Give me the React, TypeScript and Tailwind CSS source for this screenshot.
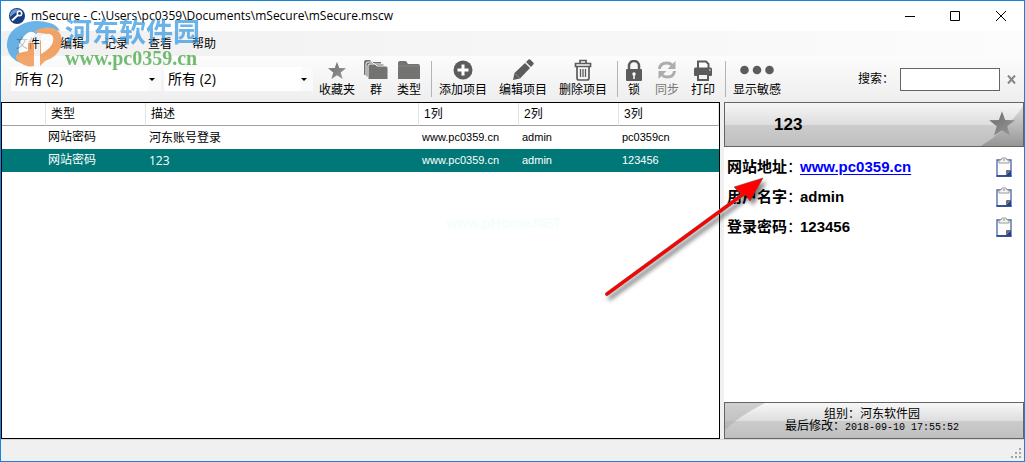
import type { ReactNode } from "react";
import clsx from "clsx";

const STAR = "M12 1l2.7 7.6 8.3.2-6.500 5 2.300 8L12 17.200 5.200 21.800l2.300-8L1 8.800l8.300-.2z";

const rows = [
  { type: "网站密码", desc: "河东账号登录", cols: ["www.pc0359.cn", "admin", "pc0359cn"] },
  { type: "网站密码", desc: "123", cols: ["www.pc0359.cn", "admin", "123456"] },
];

const menus = ["文件", "编辑", "记录", "查看", "帮助"];

function StarIcon({ className }: { className?: string }) {
  return (
    <svg viewBox="0 0 24 23" className={className}>
      <defs>
        <linearGradient id="star" x1="0" y1="0" x2="1" y2="1">
          <stop offset="0" stopColor="#6b6b6b" />
          <stop offset="1" stopColor="#999999" />
        </linearGradient>
      </defs>
      <path d={STAR} fill="url(#star)" />
    </svg>
  );
}

function FolderIcon() {
  return (
    <svg width="24" height="20" viewBox="0 0 24 20">
      <path d="M1 19V3q0-2 2-2h6l2 3h10q2 0 2 2v13z" fill="#737371" />
      <path d="M1 6h22" stroke="#858583" />
    </svg>
  );
}

function FoldersIcon() {
  return (
    <svg width="26" height="20" viewBox="0 0 26 20">
      <path d="M1 15V2q0-2 2-2h4l2 2h9v13z" fill="#737371" />
      <path d="M3 17V4q0-2 2-2h4l2 2h10v13z" fill="#737371" stroke="#f5f5f5" />
      <path d="M5 19.500V6q0-2 2-2h5l2 2h9q2 0 2 2v11.500z" fill="#737371" stroke="#f5f5f5" />
    </svg>
  );
}

function AddIcon() {
  return (
    <svg width="20" height="20" viewBox="0 0 20 20">
      <circle cx="10" cy="10" r="9.500" fill="#5c5c5c" />
      <path d="M10 4.500v11M4.500 10h11" stroke="#fff" strokeWidth="3" />
    </svg>
  );
}

function PencilIcon() {
  return (
    <svg width="22" height="22" viewBox="0 0 22 22">
      <path d="M1 21l1.500-7L13 4l5 5L8 19.500z" fill="#5c5c5c" />
      <path d="M14 3l2.500-2.500q1-.7 2 .2l2.700 2.800q1 1 .1 2L19 8z" fill="#5c5c5c" />
      <path d="M3 14.500l4.500 4.500" stroke="#a0a0a0" strokeWidth=".8" />
    </svg>
  );
}

function TrashIcon() {
  return (
    <svg width="18" height="22" viewBox="0 0 18 22" fill="none" stroke="#5c5c5c" strokeWidth="1.700">
      <path d="M6 4V1.500h6V4M1.500 7.500V4.500h15v3z" />
      <path d="M3 7.500V19q0 2 2 2h8q2 0 2-2V7.500" />
      <path d="M6.500 10v8M9 10v8M11.500 10v8" strokeWidth="1.300" />
    </svg>
  );
}

function LockIcon() {
  return (
    <svg width="18" height="21" viewBox="0 0 18 21">
      <path d="M4 10V6a5 5 0 0110 0v4" fill="none" stroke="#5c5c5c" strokeWidth="2.500" />
      <rect x="1" y="9" width="16" height="12" rx="1" fill="#5c5c5c" />
      <circle cx="9" cy="14" r="1.700" fill="#fff" />
      <path d="M9 14v5" stroke="#fff" strokeWidth="1.500" />
    </svg>
  );
}

function SyncIcon() {
  return (
    <svg width="20" height="20" viewBox="0 0 20 20">
      <path d="M2.500 9q.5-6 7.500-6 3 0 5 2" fill="none" stroke="#adadad" strokeWidth="3" />
      <path d="M18.500 1v8h-8z" fill="#adadad" />
      <path d="M17.500 11q-.5 6-7.500 6-3 0-5-2" fill="none" stroke="#adadad" strokeWidth="3" />
      <path d="M1.500 19v-8h8z" fill="#adadad" />
    </svg>
  );
}

function PrintIcon() {
  return (
    <svg width="20" height="21" viewBox="0 0 20 21">
      <path d="M5 8V1.500h8L15.500 4v4" fill="#fff" stroke="#5c5c5c" strokeWidth="2" />
      <path d="M1 15V9q0-1.500 1.500-1.500h15Q19 7.500 19 9v6q0 1-1 1H2q-1 0-1-1z" fill="#5c5c5c" />
      <path d="M5 14h10v6H5z" fill="#f5f5f5" stroke="#5c5c5c" strokeWidth="2" />
      <path d="M2 12.500h16" stroke="#5c5c5c" strokeWidth="2" />
      <path d="M16 10h1.500" stroke="#fff" />
    </svg>
  );
}

function DotsIcon() {
  return (
    <svg width="34" height="10" viewBox="0 0 34 10" fill="#5c5c5c">
      <circle cx="4.500" cy="5" r="4.300" />
      <circle cx="17" cy="5" r="4.300" />
      <circle cx="29.500" cy="5" r="4.300" />
    </svg>
  );
}

function ClipboardIcon() {
  return (
    <svg width="16" height="20" viewBox="0 0 16 20">
      <path d="M1 3h14v16H1z" fill="#fdfdfd" stroke="#4a64a3" strokeWidth="1.300" />
      <path d="M.5 19h15" stroke="#24428c" strokeWidth="1.500" />
      <path d="M9 19l6-6v6z" fill="#24428c" />
      <path d="M10 18v-4q0-1 1-1h4z" fill="#6e6e6e" />
      <path d="M3 6V4q0-1 1-1h1l1-2h4l1 2h1q1 0 1 1v2z" fill="#f4f4f4" stroke="#9a9a9a" />
      <path d="M7 3h2" stroke="#8c8c8c" />
    </svg>
  );
}

function ToolButton({ label, icon, className, dim }: { label: string; icon: ReactNode; className: string; dim?: boolean }) {
  return (
    <button className={clsx("flex shrink-0 flex-col items-center whitespace-nowrap pb-0.5", className, dim && "text-[#777]")}>
      <span className="flex h-6 items-center">{icon}</span>
      <span className="leading-4">{label}</span>
    </button>
  );
}

function Separator({ className }: { className: string }) {
  return <div className={clsx("h-9 w-px shrink-0 bg-[#b4b4b4]", className)} />;
}

function Combo({ label, className }: { label: string; className: string }) {
  return (
    <div className={clsx("relative h-6 shrink-0 bg-white", className)}>
      <select
        aria-label={label}
        className="h-full w-full appearance-none px-1 font-['Open_Sans','Noto_Sans_CJK_SC',sans-serif] text-[14px] leading-6"
      >
        <option>所有 (2)</option>
      </select>
      <span className="pointer-events-none absolute inset-y-0 right-0 flex w-3 items-center bg-[#fafafa]">
        <svg width="6" height="3" viewBox="0 0 6 3">
          <path d="M0 0h6L3 3z" />
        </svg>
      </span>
    </div>
  );
}

function TitleBar() {
  return (
    <header className="flex h-[30px] shrink-0 items-center bg-white pl-2 font-['Open_Sans',sans-serif]">
      <svg width="16" height="16" viewBox="0 0 16 16">
        <circle cx="8" cy="8" r="8" fill="#173d80" />
        <path d="M1 6q2-5 7-5 3 0 5 2Q7 3 1 9z" fill="#6d9ad4" />
        <path d="M3 12.500L9 7" stroke="#fff" strokeWidth="2" />
        <circle cx="10.500" cy="5.500" r="2.200" fill="none" stroke="#fff" strokeWidth="1.500" />
      </svg>
      <h1 className="ml-1.5 whitespace-nowrap text-[12px]">mSecure - C:\Users\pc0359\Documents\mSecure\mSecure.mscw</h1>
      <div className="ml-auto flex h-full">
        <button aria-label="最小化" className="flex w-[45px] items-center justify-center">
          <svg width="10" height="10" viewBox="0 0 10 10"><path d="M0 5.500h10" stroke="#000" /></svg>
        </button>
        <button aria-label="最大化" className="flex w-[46px] items-center justify-center">
          <svg width="10" height="10" viewBox="0 0 10 10"><path d="M.5.5h9v9h-9z" fill="none" stroke="#000" /></svg>
        </button>
        <button aria-label="关闭" className="flex w-[46px] items-center justify-center">
          <svg width="10" height="10" viewBox="0 0 10 10"><path d="M0 0l10 10M10 0L0 10" stroke="#000" /></svg>
        </button>
      </div>
    </header>
  );
}

function Toolbar() {
  return (
    <div className="flex h-[46px] shrink-0 items-center bg-linear-to-b from-[#fcfcfc] to-[#eeeeee] pl-2.5">
      <Combo label="类型" className="w-[150px]" />
      <Combo label="群" className="ml-[3px] w-[149px]" />
      <ToolButton label="收藏夹" className="ml-1.5 w-9" icon={<StarIcon className="h-[19px] w-5" />} />
      <ToolButton label="群" className="ml-2 w-[26px]" icon={<FoldersIcon />} />
      <ToolButton label="类型" className="ml-2 w-6" icon={<FolderIcon />} />
      <Separator className="ml-2.5" />
      <ToolButton label="添加项目" className="ml-[7px] w-12" icon={<AddIcon />} />
      <ToolButton label="编辑项目" className="ml-3 w-12" icon={<PencilIcon />} />
      <ToolButton label="删除项目" className="ml-3 w-12" icon={<TrashIcon />} />
      <Separator className="ml-2.5" />
      <ToolButton label="锁" className="ml-[7px] w-[18px]" icon={<LockIcon />} />
      <ToolButton label="同步" className="ml-3 w-6" icon={<SyncIcon />} dim />
      <ToolButton label="打印" className="ml-3 w-6" icon={<PrintIcon />} />
      <Separator className="ml-2.5" />
      <ToolButton label="显示敏感" className="ml-[7px] w-12" icon={<DotsIcon />} />
      <label htmlFor="search" className="ml-auto whitespace-nowrap">搜索：</label>
      <input id="search" className="ml-1.5 h-[23px] w-[100px] border border-[#646464] bg-white px-1" />
      <button aria-label="清除" className="ml-[7px] mr-2">
        <svg width="9" height="9" viewBox="0 0 9 9">
          <path d="M1 .5l7 8M8 .5l-7 8" stroke="#858585" strokeWidth="2" />
        </svg>
      </button>
    </div>
  );
}

function RecordList() {
  return (
    <section className="min-w-0 flex-1 border border-black bg-white">
      <table className="w-full table-fixed border-separate border-spacing-0 text-left">
        <colgroup>
          <col className="w-11" />
          <col className="w-[100px]" />
          <col />
          <col className="w-[100px]" />
          <col className="w-[100px]" />
          <col className="w-[100px]" />
        </colgroup>
        <thead>
          <tr>
            {["", "类型", "描述", "1列", "2列", "3列"].map((name, i) => (
              <th key={i} className="h-[23px] border-b border-r border-b-[#a0a0a0] border-r-[#e3e3e3] px-[5px] py-0 font-normal leading-[22px]">
                {name}
              </th>
            ))}
          </tr>
        </thead>
        <tbody>
          {rows.map((row, i) => (
            <tr key={i} className={clsx("h-[23px]", i === 1 && "bg-[#007878] text-white")}>
              <td className="p-0" />
              <td className="px-0.5 py-0 leading-[23px]">{row.type}</td>
              <td className="px-[3px] py-0 font-['Open_Sans','Noto_Sans_CJK_SC',sans-serif] leading-[23px]">{row.desc}</td>
              {row.cols.map((value, j) => (
                <td key={j} className="px-[3px] py-0 text-[11px] leading-[23px]">{value}</td>
              ))}
            </tr>
          ))}
        </tbody>
      </table>
    </section>
  );
}

function Field({ label, children }: { label: string; children: ReactNode }) {
  return (
    <div className="flex h-[30px] items-center pl-[3px] pr-3 text-[15px] font-bold">
      <dt className="w-[73px] shrink-0 whitespace-nowrap">
        {label}
        <span className="font-normal">：</span>
      </dt>
      <dd className="flex flex-1 items-center justify-between">
        {children}
        <button aria-label={`复制${label}`}>
          <ClipboardIcon />
        </button>
      </dd>
    </div>
  );
}

function DetailPanel() {
  return (
    <aside className="flex w-[300px] shrink-0 flex-col bg-white">
      <div className="relative flex h-[45px] items-center overflow-hidden border border-[#646464] bg-[linear-gradient(#f6f6f6,#dedede_50%,#cccccc_51%,#bfbfbf)] pl-[49px]">
        <svg className="absolute right-0 top-0 h-full w-[42px]" viewBox="0 0 42 43" preserveAspectRatio="none">
          <defs>
            <linearGradient id="corner" x1="0" y1="0" x2="0" y2="1">
              <stop offset="0" stopColor="#dcdcdc" />
              <stop offset="1" stopColor="#969696" />
            </linearGradient>
          </defs>
          <path d="M0 43Q26 27 42 3v40z" fill="url(#corner)" />
        </svg>
        <h2 className="text-[17px] font-bold">123</h2>
        <StarIcon className="absolute right-[7px] top-[7px] h-[27px] w-7" />
      </div>
      <dl className="flex-1 pt-[5px]">
        <Field label="网站地址">
          <a href="#" className="text-[#0000ff] underline underline-offset-2">www.pc0359.cn</a>
        </Field>
        <Field label="用户名字">
          <span>admin</span>
        </Field>
        <Field label="登录密码">
          <span>123456</span>
        </Field>
      </dl>
      <div className="relative flex h-[37px] flex-col items-center justify-center border border-[#646464] bg-[linear-gradient(#f8f8f8,#dedede_50%,#cccccc_51%,#bfbfbf)] pr-1 leading-3">
        <svg className="absolute left-0 top-0 h-full w-10" viewBox="0 0 40 35" preserveAspectRatio="none">
          <path d="M0 0h40Q14 13 0 27z" fill="#a8a8a8" fillOpacity=".5" />
        </svg>
        <p>组别：河东软件园</p>
        <p>
          最后修改：<span className="font-['Liberation_Mono',monospace] text-[10px]">2018-09-10 17:55:52</span>
        </p>
      </div>
    </aside>
  );
}

function StatusBar() {
  return (
    <footer className="flex h-[22px] shrink-0 items-end justify-end border-t border-[#d7d7d7] bg-[#f0f0f0] p-[3px]">
      <svg width="10" height="10" viewBox="0 0 10 10" fill="#a6a6a6">
        <path d="M8 0h2v2H8zM4 4h2v2H4zM8 4h2v2H8zM0 8h2v2H0zM4 8h2v2H4zM8 8h2v2H8z" />
      </svg>
    </footer>
  );
}

function Watermark() {
  return (
    <div className="pointer-events-none absolute left-1 top-3 flex opacity-75">
      <svg width="60" height="56" viewBox="0 0 60 56">
        <path d="M2 34Q1 20 14 13 27 5 45 10q7 2 10 8-16-5-24 3-6 7-7 17l-8 12Q4 46 2 34z" fill="#3c9be0" />
        <path d="M20 22q6-6 11-1-5 6-6 14l-8 11q-8-12 3-24z" fill="#fff" />
        <path d="M12 47q-3-5 2-7l9-2v-8h6v23q-9 2-17-6z" fill="#f08a3a" />
        <path d="M29 19q8-6 19-4 9 3 9 14-2 14-17 19l-5 5V28l7-7z" fill="#f08a3a" />
        <path d="M36 23q9-5 12 1 2 9-12 17z" fill="#fff" />
      </svg>
      <div className="flex flex-col">
        <span className="whitespace-nowrap font-['Noto_Sans_CJK_SC',sans-serif] text-[27px] font-bold leading-[35px] text-[#3c9be0]">河东软件园</span>
        <span className="font-['Liberation_Serif',serif] text-[20px] font-bold leading-5 text-[#45a845]">www.pc0359.cn</span>
      </div>
    </div>
  );
}

export default function App() {
  return (
    <div className="relative flex h-screen flex-col overflow-hidden border border-[#1883d7] bg-[#f0f0f0] font-['Liberation_Sans','Noto_Sans_CJK_SC',sans-serif] text-[12px] text-black">
      <TitleBar />
      <nav className="flex h-[25px] shrink-0 items-center gap-5 bg-linear-to-r from-[#f0f0f0] to-[#fcfcfc] pl-[15px]">
        {menus.map((name) => (
          <button key={name}>{name}</button>
        ))}
      </nav>
      <Toolbar />
      <main className="flex min-h-0 flex-1 gap-1">
        <RecordList />
        <DetailPanel />
      </main>
      <StatusBar />
      <Watermark />
      <span className="pointer-events-none absolute left-[445px] top-[212px] text-[14px] font-bold text-[#f6fdfd]">www.pHome.NET</span>
      <svg className="pointer-events-none absolute left-[600px] top-[169px] drop-shadow-[3px_4px_2px_rgba(0,0,0,0.5)]" width="175" height="130" viewBox="0 0 175 130">
        <path d="M6 124L148 20" stroke="#787878" strokeWidth="4" strokeLinecap="round" />
        <path d="M162 8L149 31l-5-7-5-1-6-6z" fill="#ff0000" stroke="#8c3c3c" strokeWidth=".6" />
        <path d="M6 124L148 20" stroke="#ff0000" strokeWidth="3" strokeLinecap="round" />
      </svg>
    </div>
  );
}
